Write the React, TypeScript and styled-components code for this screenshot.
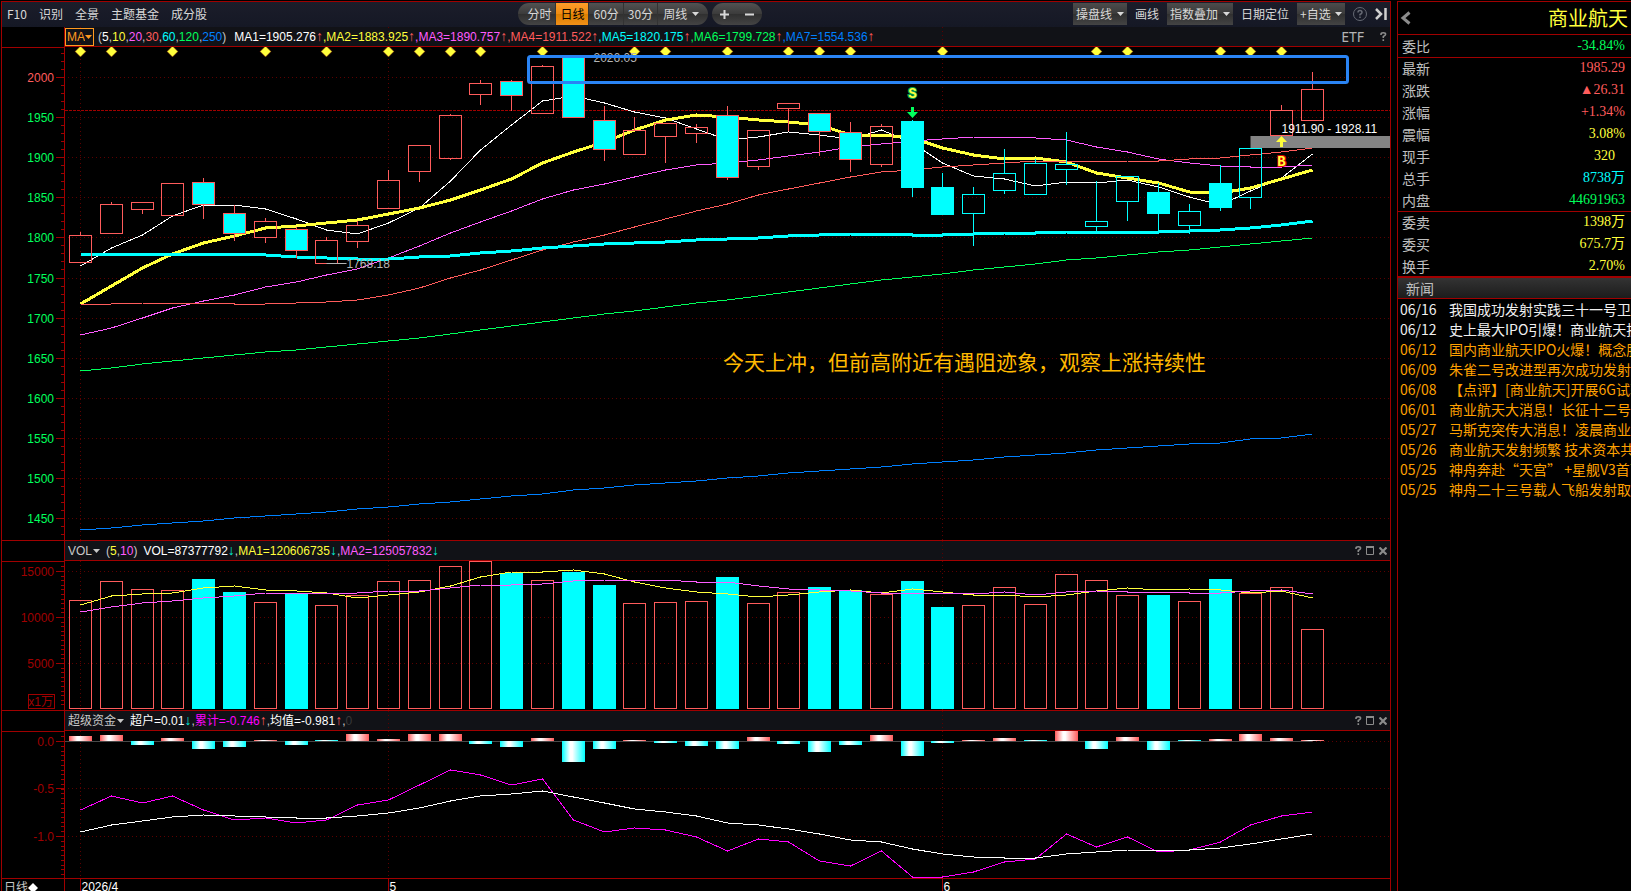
import React, { ReactNode, useLayoutEffect, useRef, useState } from 'react';
import styled, { createGlobalStyle } from 'styled-components';

const RED = '#a00000';
const UP = '#ff5c5c';
const CYAN = '#00ffff';
const YELLOW = '#ffff3c';
const MAGENTA = '#ff5cff';
const GREEN = '#00ff5c';
const BLUE = '#0080ff';
const GRID = '#5c0000';
const SANS = '"Liberation Sans", "Noto Sans CJK SC", sans-serif';
const CJK = '"Noto Sans CJK SC", sans-serif';

const Global = createGlobalStyle`
  * { box-sizing: border-box; }
  body { margin: 0; background: #000; color: #fff; font: 12px/18px ${SANS}; }
  button, select { font: inherit; color: inherit; background: none; border: 0; padding: 0; margin: 0; cursor: pointer; }
  option { background: #222; color: #ddd; }
  a { color: inherit; text-decoration: none; }
`;

const Page = styled.div`
  display: flex;
  gap: 6px;
  height: 100vh;
  min-height: 600px;
  padding: 1px 0 0 1px;
  overflow: hidden;
`;

const ChartPanel = styled.main`
  flex: 1;
  min-width: 0;
  display: flex;
  flex-direction: column;
  border: 1px solid ${RED};
  border-bottom: 0;
`;

const Toolbar = styled.header`
  flex: none;
  height: 25px;
  display: flex;
  align-items: center;
  padding: 0 3px 1px 0;
  background: linear-gradient(#1b1d2a, #151825);
  color: #d8d8d8;
  font-family: ${CJK};
  white-space: nowrap;
`;

const ToolLinks = styled.nav`
  display: flex;
  gap: 12px;
  width: 37%;
  margin-right: 4px;
  padding-left: 5px;
`;

const Pill = styled.div`
  display: flex;
  height: 22px;
  margin-right: 4px;
  border-radius: 11px;
  overflow: hidden;
  background: linear-gradient(#525252, #3c3c3c 48%, #303030 52%, #444);
`;

const PillButton = styled.button<{ $active?: boolean; $first?: boolean }>`
  padding: ${p => (p.$first ? '0 4px 0 9px' : '0 4px')};
  border-right: 1px solid #333;
  color: ${p => (p.$active ? '#000' : 'inherit')};
  background: ${p => (p.$active ? 'linear-gradient(#ff9d2a, #ee8c12 48%, #dd7f00 52%, #f09018)' : 'none')};
`;

const ZoomButton = styled.button`
  width: 25px;
  display: grid;
  place-items: center;
`;

const RightTools = styled.div`
  margin-left: auto;
  display: flex;
  align-items: center;
  gap: 8px;
`;

const SelectBox = styled.span<{ $skin?: 'raised' | 'outline' | 'pill' }>`
  display: inline-flex;
  align-items: center;
  color: ${p => (p.$skin === 'outline' ? '#ff9a20' : 'inherit')};
  height: ${p => (p.$skin === 'raised' ? '22px' : p.$skin === 'outline' ? '18px' : 'auto')};
  padding: ${p => (p.$skin === 'raised' ? '0 3px' : p.$skin === 'outline' ? '0 1px' : p.$skin === 'pill' ? '0 9px 0 5px' : '0')};
  border: ${p => (p.$skin === 'outline' ? '1px solid #ff9a20' : '0')};
  background: ${p => (p.$skin === 'raised' ? 'linear-gradient(#4c4c4c, #3a3a3a 48%, #303030 52%, #444)' : 'none')};
  select { appearance: none; outline: 0; }
  svg { margin-left: ${p => (p.$skin === 'raised' || p.$skin === 'pill' ? '4px' : '0')}; pointer-events: none; }
`;

const IconButton = styled.button`
  display: grid;
  place-items: center;
  color: #8c8c8c;
`;

const PaneBox = styled.section<{ $height?: number }>`
  display: flex;
  flex: ${p => (p.$height ? `0 0 ${p.$height}px` : '1 1 0')};
  min-height: 0;
  border-bottom: 1px solid ${RED};
`;

const AxisColumn = styled.div`
  flex: none;
  width: 63px;
  display: flex;
  flex-direction: column;
  border-right: 1px solid ${RED};
`;

const Corner = styled.div`
  flex: none;
  height: 21px;
  border-bottom: 1px solid ${RED};
`;

const PlotColumn = styled.div`
  flex: 1;
  min-width: 0;
  display: flex;
  flex-direction: column;
`;

const PlotHeader = styled.div`
  position: relative;
  flex: none;
  height: 20px;
  display: flex;
  align-items: center;
  padding-right: 3px;
  background: #111217;
  border-bottom: 1px solid ${RED};
  color: #c8c8c8;
  white-space: nowrap;
`;

const HeaderGuides = styled.div`
  position: absolute;
  inset: 0;
  display: flex;
  pointer-events: none;
`;

const Readout = styled.div<{ $flush?: boolean }>`
  display: flex;
  align-items: center;
  gap: ${p => (p.$flush ? 4 : 6)}px;
  padding-left: ${p => (p.$flush ? 0 : 3)}px;
`;

const Periods = styled.span`
  margin-right: 4px;
`;

const Ink = styled.span<{ $c: string }>`
  color: ${p => p.$c};
`;

const Arrow = styled(Ink)`
  font-size: 14px;
  line-height: 16px;
`;

const HeaderTools = styled.div`
  position: relative;
  margin-left: auto;
  display: flex;
  align-items: center;
  gap: 4px;
`;

const MarketTag = styled.button`
  margin-right: 12px;
  font: 14px/18px "Noto Sans", sans-serif;
  color: #b4b4b4;
`;

const SurfaceBox = styled.div`
  flex: 1;
  min-width: 0;
  min-height: 0;
  overflow: hidden;
  svg { display: block; }
`;

const DateRow = styled.footer`
  flex: none;
  height: 12px;
  display: flex;
  overflow: hidden;
`;

const PeriodCell = styled.div`
  flex: none;
  width: 63px;
  padding-left: 2px;
  border-right: 1px solid ${RED};
  color: #c8c8c8;
  button { display: flex; align-items: center; line-height: 18px; }
`;

const QuotePanel = styled.aside`
  flex: none;
  width: 234px;
  border-left: 1px solid ${RED};
  border-top: 1px solid ${RED};
  overflow: hidden;
`;

const TitleRow = styled.div`
  display: flex;
  align-items: center;
  justify-content: space-between;
  height: 33px;
  padding: 0 3px 0 2px;
  border-bottom: 1px solid ${RED};
  h1 { margin: 0; font: 400 20px/32px ${CJK}; color: ${YELLOW}; }
`;

const QuoteTable = styled.table`
  width: 100%;
  border-collapse: collapse;
  border-bottom: 2px solid ${RED};
`;

const QuoteGroup = styled.tbody`
  & + & { border-top: 1px solid ${RED}; }
`;

const QuoteLabel = styled.th`
  height: 22px;
  padding: 0 0 0 4px;
  text-align: left;
  font: 400 14px/20px ${CJK};
  color: #c0c0c0;
`;

const QuoteValue = styled.td<{ $c: string; $inset?: boolean }>`
  padding: 0 ${p => (p.$inset ? 16 : 6)}px 0 0;
  text-align: right;
  font: 14px/20px "Liberation Serif", "Noto Sans CJK SC", serif;
  color: ${p => p.$c};
`;

const NewsHeading = styled.h2`
  margin: 0;
  padding-left: 8px;
  height: 21px;
  font: 400 14px/20px ${CJK};
  color: #c0c0c0;
  background: linear-gradient(#333, #1c1c1c);
  border-bottom: 1px solid ${RED};
`;

const NewsList = styled.ul`
  margin: 0;
  padding: 0 0 0 2px;
  list-style: none;
`;

const NewsItem = styled.li<{ $fresh?: boolean }>`
  color: ${p => (p.$fresh ? '#f0f0f0' : '#ffa000')};
  a {
    display: grid;
    grid-template-columns: 49px 1fr;
    font: 14px/20px ${CJK};
    white-space: nowrap;
  }
`;

const Caret = () => (
  <svg width="7" height="4" viewBox="0 0 7 4" aria-hidden="true">
    <path d="M0 0H7L3.5 4Z" fill="currentColor" />
  </svg>
);

function Dropdown({ label, text, skin }: { label: string; text: string; skin?: 'raised' | 'outline' | 'pill' }) {
  return (
    <SelectBox $skin={skin}>
      <select aria-label={label} defaultValue={text}>
        <option>{text}</option>
      </select>
      <Caret />
    </SelectBox>
  );
}

/** Measures its box and hands the size to the drawing inside. */
function Surface({ children }: { children: (w: number, h: number) => ReactNode }) {
  const ref = useRef<HTMLDivElement>(null);
  const [size, setSize] = useState({ w: 0, h: 0 });
  useLayoutEffect(() => {
    const el = ref.current;
    if (!el) return;
    const read = () => setSize({ w: el.clientWidth, h: el.clientHeight });
    read();
    const ro = new ResizeObserver(read);
    ro.observe(el);
    return () => ro.disconnect();
  }, []);
  return (
    <SurfaceBox ref={ref}>
      {size.w > 0 && (
        <svg width={size.w} height={size.h} fontSize="12">
          {children(size.w, size.h)}
        </svg>
      )}
    </SurfaceBox>
  );
}

const BASE_WIDTH = 1325;
const snap = (v: number) => Math.floor(v) + 0.5;
const xOf = (i: number, w: number) => snap(((15.5 + i * 30.8) * w) / BASE_WIDTH);
type Domain = [number, number];
const yOf = (v: number, d: Domain, h: number) => ((v - d[0]) / (d[1] - d[0])) * h;

const PRICE: Domain = [47, 540];
const VOLUME: Domain = [561, 710];
const FUND: Domain = [731, 878];
const MONTHS = [0, 10, 28];

type Tick = { at: number; text: string; color?: string };
const priceTicks: Tick[] = Array.from({ length: 12 }, (_, i) => ({
  at: 77.5 + i * 40.1,
  text: String(2000 - i * 50),
  color: i === 0 ? UP : GREEN,
}));
const volumeTicks: Tick[] = [
  { at: 571.5, text: '15000' },
  { at: 617.5, text: '10000' },
  { at: 663.5, text: '5000' },
];
const fundTicks: Tick[] = [
  { at: 741.5, text: '0.0' },
  { at: 788.5, text: '-0.5' },
  { at: 836.5, text: '-1.0' },
];

function Axis({ ticks, domain, minor, unit }: { ticks: Tick[]; domain: Domain; minor: number; unit?: string }) {
  return (
    <Surface>
      {(w, h) => {
        const marks: number[] = [];
        for (let v = ticks[0].at; v > domain[0] + 3; v -= minor) marks.push(v);
        for (let v = ticks[0].at; v < domain[1] - 2; v += minor) marks.push(v);
        // the corner cell is one pixel taller than the plot header
        const y = (v: number) => snap(yOf(v, domain, h + 1) - 1);
        return (
          <>
            <g stroke={RED} shapeRendering="crispEdges">
              {marks.map((v, i) => <line key={i} x1={w - 3} x2={w} y1={y(v)} y2={y(v)} />)}
              {ticks.map(t => <line key={t.text} x1={w - 8} x2={w} y1={y(t.at)} y2={y(t.at)} />)}
            </g>
            {ticks.map(t => (
              <text key={t.text} x={w - 10} y={y(t.at) + 4} textAnchor="end" fill={t.color ?? RED}>{t.text}</text>
            ))}
            {unit && (
              <>
                <rect x={w - 35.5} y={h - 15.5} width="26" height="14" fill="none" stroke={RED} />
                <text x={w - 11} y={h - 4} textAnchor="end" fill={RED}>{unit}</text>
              </>
            )}
          </>
        );
      }}
    </Surface>
  );
}

const MonthGuides = ({ w, h }: { w: number; h: number }) => (
  <g stroke={GRID} strokeDasharray="1 3" shapeRendering="crispEdges">
    {MONTHS.map(i => <line key={i} x1={xOf(i, w)} x2={xOf(i, w)} y1="0" y2={h} />)}
  </g>
);

function Gridlines({ w, h, ticks, domain }: { w: number; h: number; ticks: Tick[]; domain: Domain }) {
  return (
    <>
      <MonthGuides w={w} h={h} />
      <g stroke={GRID} strokeDasharray="1 3" shapeRendering="crispEdges">
        {ticks.map(t => {
          const y = snap(yOf(t.at, domain, h));
          return <line key={t.text} x1="3" x2={w} y1={y} y2={y} />;
        })}
      </g>
    </>
  );
}

function Line({ data, w, h, domain, color, thick }: { data: number[]; w: number; h: number; domain: Domain; color: string; thick?: boolean }) {
  return (
    <polyline
      points={data.map((v, i) => `${xOf(i, w)},${yOf(v, domain, h)}`).join(' ')}
      fill="none"
      stroke={color}
      strokeWidth={thick ? 3 : 1}
      shapeRendering="crispEdges"
    />
  );
}

// body top, body bottom, wick top, wick bottom, kind
type Kind = 'up' | 'down' | 'sell' | 'hold';
const candles: [number, number, number, number, Kind][] = [
  [235, 262, 232, 262, 'up'], [204, 233, 202, 233, 'up'], [202, 209, 202, 213, 'up'], [183, 215, 183, 215, 'up'],
  [182, 204, 178, 218, 'down'], [213, 233, 205, 240, 'down'], [221, 237, 218, 242, 'up'], [229, 250, 227, 257, 'down'],
  [240, 263, 237, 263, 'up'], [225, 241, 221, 247, 'up'], [180, 208, 170, 208, 'up'], [145, 171, 145, 181, 'up'],
  [115, 158, 114, 159, 'up'], [83, 94, 80, 104, 'up'], [81, 95, 80, 110, 'down'], [66, 113, 65, 113, 'up'],
  [57, 117, 57, 117, 'down'], [120, 149, 106, 160, 'down'], [130, 154, 117, 154, 'up'], [123, 136, 123, 162, 'up'],
  [127, 133, 124, 142, 'up'], [115, 177, 106, 179, 'down'], [130, 166, 130, 169, 'up'], [103, 108, 103, 130, 'up'],
  [113, 131, 113, 155, 'down'], [132, 159, 122, 171, 'down'], [126, 164, 124, 166, 'up'], [121, 187, 120, 196, 'sell'],
  [187, 214, 173, 214, 'sell'], [194, 213, 187, 245, 'hold'], [173, 190, 149, 193, 'hold'], [163, 194, 159, 194, 'hold'],
  [164, 169, 132, 184, 'hold'], [221, 226, 181, 230, 'hold'], [176, 201, 176, 220, 'hold'], [192, 213, 183, 231, 'sell'],
  [211, 225, 204, 233, 'hold'], [183, 207, 165, 210, 'sell'], [148, 197, 148, 208, 'hold'], [110, 135, 105, 135, 'up'],
  [89, 120, 72, 120, 'up'],
];

const ma1 = [266, 248, 235, 216, 205, 205, 209, 219, 230, 234, 223, 208, 181, 150, 125, 101, 96, 103, 112, 118, 129, 140, 137, 132, 135, 139, 130, 143, 163, 176, 179, 186, 182, 183, 180, 187, 197, 205, 191, 178, 154];
const ma2 = [304, 286, 268, 254, 243, 236, 228, 226, 223, 220, 214, 208, 200, 190, 179, 163, 152, 142, 130, 120, 115, 117, 120, 122, 125, 135, 135, 138, 148, 155, 159, 158, 162, 173, 178, 183, 192, 193, 188, 179, 170];
const ma3 = [335, 328, 318, 308, 301, 295, 287, 282, 275, 269, 258, 246, 233, 222, 211, 199, 190, 184, 177, 170, 165, 163, 160, 156, 152, 147, 144, 141, 139, 137, 137, 138, 140, 147, 152, 159, 163, 166, 167, 167, 165];
const ma4 = [304, 304, 303, 303, 303, 304, 304, 303, 302, 300, 295, 288, 278, 270, 260, 250, 242, 235, 227, 219, 211, 204, 195, 189, 183, 177, 172, 170, 167, 165, 163, 161, 161, 162, 161, 161, 159, 158, 155, 152, 148];
const ma5 = [254, 254, 254, 254, 254, 254, 255, 257, 258, 259, 259, 257, 256, 253, 251, 248, 246, 244, 243, 242, 240, 239, 238, 236, 235, 234, 234, 235, 235, 234, 233, 233, 232, 232, 232, 232, 231, 230, 228, 225, 221];
const ma6 = [371, 368, 364, 361, 358, 355, 352, 350, 347, 344, 341, 338, 334, 330, 326, 322, 318, 314, 311, 307, 303, 300, 296, 292, 288, 284, 280, 277, 274, 270, 267, 264, 260, 258, 255, 252, 250, 247, 244, 241, 238];
const ma7 = [530, 528, 525, 523, 521, 518, 516, 514, 512, 509, 507, 504, 502, 499, 496, 494, 490, 488, 485, 483, 481, 478, 476, 473, 471, 469, 467, 464, 462, 460, 457, 455, 453, 450, 448, 446, 444, 443, 439, 438, 434];
const events = [0, 1, 3, 6, 8, 10, 11, 12, 13, 15, 18, 19, 21, 23, 24, 25, 28, 33, 34, 37, 38, 39];

function Candle({ i, w, h }: { i: number; w: number; h: number }) {
  const [top, bottom, high, low, kind] = candles[i];
  const x = xOf(i, w);
  const y = (v: number) => snap(yOf(v, PRICE, h));
  const stroke = kind === 'up' || kind === 'down' ? UP : CYAN;
  const fill = kind === 'down' || kind === 'sell' ? CYAN : 'none';
  return (
    <g stroke={stroke} shapeRendering="crispEdges">
      <line x1={x} x2={x} y1={y(high) - 0.5} y2={y(top)} />
      <line x1={x} x2={x} y1={y(bottom)} y2={y(low) + 0.5} />
      <rect x={x - 11} y={y(top)} width="22" height={y(bottom) - y(top)} fill={fill} />
    </g>
  );
}

function PricePlot() {
  return (
    <Surface>
      {(w, h) => {
        const y = (v: number) => yOf(v, PRICE, h);
        const s = { w, h, domain: PRICE };
        const last = snap(y(110));
        return (
          <>
            <Gridlines {...s} ticks={priceTicks} />
            <line x1="0" x2={w} y1={last} y2={last} stroke={RED} strokeDasharray="3 1" shapeRendering="crispEdges" />
            <rect x={xOf(38, w)} y={Math.round(y(136))} width={w - xOf(38, w)} height="12" fill="#848484" />
            <Line {...s} data={ma7} color={BLUE} />
            <Line {...s} data={ma6} color={GREEN} />
            <Line {...s} data={ma1} color="#fff" />
            <Line {...s} data={ma2} color={YELLOW} thick />
            <Line {...s} data={ma3} color={MAGENTA} />
            <Line {...s} data={ma4} color={UP} />
            <Line {...s} data={ma5} color={CYAN} thick />
            {candles.map((_, i) => <Candle key={i} i={i} w={w} h={h} />)}
            {events.map(i => {
              const x = xOf(i, w);
              return <path key={i} d={`M${x} -1l5.500 5.500-5.500 5.500-5.500-5.500Z`} fill={YELLOW} stroke="#600000" strokeWidth="0.500" />;
            })}
            <g fill="#b4b4b4">
              <text x={xOf(16, w) + 20} y={y(62)}>2026.05</text>
              <text x={xOf(8, w) + 20} y={y(268)}>1768.18</text>
              <rect x={xOf(8, w)} y={Math.round(y(263))} width="20" height="1" />
            </g>
            <rect x={xOf(15, w) - 14} y={y(56) + 0.5} width={xOf(40, w) - xOf(15, w) + 49} height={y(82) - y(56)} rx="2" fill="none" stroke="#2a84f4" strokeWidth="3" />
            <g fontFamily='"Liberation Mono", monospace' fontWeight="700" fontSize="14" textAnchor="middle" strokeWidth="2" paintOrder="stroke">
              <text x={xOf(27, w)} y={y(98)} fill={YELLOW} stroke="#00a050">S</text>
              <text x={xOf(39, w)} y={y(166)} fill={YELLOW} stroke="#e00000">B</text>
            </g>
            <path d={`M${xOf(27, w) - 1.5} ${y(107)}h3v5h4l-5.500 6-5.500-6h4Z`} fill={GREEN} />
            <path d={`M${xOf(39, w) - 1.5} ${y(147)}h3v-5h4l-5.500-6-5.500 6h4Z`} fill={YELLOW} />
            <text x={xOf(39, w)} y={y(133)} fill="#fff">1911.90 - 1928.11</text>
            <text x={(w * 658) / BASE_WIDTH} y={y(370)} fill="#ffb900" fontFamily={CJK} fontSize="21">
              今天上冲，但前高附近有遇阻迹象，观察上涨持续性
            </text>
          </>
        );
      }}
    </Surface>
  );
}

const volumes = [600, 581, 589, 590, 579, 592, 602, 594, 605, 595, 581, 580, 566, 561, 573, 580, 572, 585, 603, 602, 601, 577, 603, 592, 587, 590, 594, 581, 607, 605, 587, 604, 574, 580, 595, 595, 601, 579, 593, 587, 629];
const fallingVolumes = new Set([4, 5, 7, 14, 16, 17, 21, 24, 25, 27, 28, 35, 37]);
const volMa1 = [605, 596, 594, 593, 588, 586, 590, 591, 593, 598, 595, 592, 586, 577, 572, 572, 570, 574, 582, 588, 592, 594, 597, 595, 592, 590, 593, 589, 592, 595, 595, 597, 595, 591, 588, 590, 589, 590, 593, 591, 598];
const volMa2 = [612, 607, 603, 601, 598, 596, 593, 593, 594, 593, 591, 591, 588, 585, 585, 584, 581, 580, 580, 580, 582, 582, 586, 589, 590, 591, 593, 593, 593, 594, 592, 595, 592, 591, 592, 592, 593, 593, 591, 590, 594];

function VolumePlot() {
  return (
    <Surface>
      {(w, h) => {
        const s = { w, h, domain: VOLUME };
        return (
          <>
            <Gridlines {...s} ticks={volumeTicks} />
            <g stroke={UP} shapeRendering="crispEdges">
              {volumes.map((v, i) => {
                const top = snap(yOf(v, VOLUME, h));
                const falling = fallingVolumes.has(i);
                return (
                  <rect key={i} x={xOf(i, w) - 11} y={top} width="22" height={h - 1.5 - top} fill={falling ? CYAN : 'none'} stroke={falling ? CYAN : UP} />
                );
              })}
            </g>
            <Line {...s} data={volMa1} color={YELLOW} />
            <Line {...s} data={volMa2} color={MAGENTA} />
          </>
        );
      }}
    </Surface>
  );
}

// height above (+) or below (-) the zero line
const flows = [5, 6, -4, 3, -8, -6, 1, -4, 1, 7, 2, 7, 7, -3, -6, 3, -21, -8, 1, -2, -5, -8, 4, -3, -11, -4, 6, -15, -2, 1, 3, 1, 10, -8, 4, -9, 1, 2, 7, 3, 1];
const coolFlows = new Set([8, 31, 36]);
const fundSum = [810, 796, 803, 796, 810, 820, 818, 823, 820, 805, 800, 785, 770, 775, 785, 779, 820, 832, 828, 830, 837, 851, 839, 842, 861, 866, 851, 877, 877, 872, 862, 859, 834, 847, 837, 852, 850, 842, 825, 816, 812];
const fundMean = [832, 825, 821, 817, 815, 816, 817, 818, 818, 816, 813, 808, 801, 796, 794, 791, 797, 803, 809, 812, 816, 823, 825, 829, 834, 840, 842, 849, 854, 857, 858, 858, 854, 852, 850, 850, 850, 848, 844, 839, 834];

function FundPlot() {
  return (
    <Surface>
      {(w, h) => {
        const s = { w, h, domain: FUND };
        const zero = Math.floor(yOf(741, FUND, h));
        return (
          <>
            <defs>
              {[['warm', UP], ['cool', CYAN]].map(([id, c]) => (
                <linearGradient key={id} id={id}>
                  <stop offset="0" stopColor={c} />
                  <stop offset="0.35" stopColor="#fff" />
                  <stop offset="0.45" stopColor="#fff" />
                  <stop offset="1" stopColor={c} />
                </linearGradient>
              ))}
            </defs>
            <Gridlines {...s} ticks={fundTicks} />
            <rect x="0" y={zero} width={xOf(40, w)} height="1" fill="#484848" />
            {flows.map((v, i) => (
              <rect
                key={i}
                x={xOf(i, w) - 11.5}
                y={v > 0 ? zero - v : zero}
                width="23"
                height={Math.abs(v)}
                fill={v < 0 || coolFlows.has(i) ? 'url(#cool)' : 'url(#warm)'}
              />
            ))}
            <Line {...s} data={fundSum} color="#ff00ff" />
            <Line {...s} data={fundMean} color="#fff" />
          </>
        );
      }}
    </Surface>
  );
}

function Pane({ height, axis, header, tools, children }: { height?: number; axis: ReactNode; header: ReactNode; tools: ReactNode; children: ReactNode }) {
  return (
    <PaneBox $height={height}>
      <AxisColumn>
        <Corner />
        {axis}
      </AxisColumn>
      <PlotColumn>
        <PlotHeader>
          <HeaderGuides>
            <Surface>{(w, h) => <MonthGuides w={w} h={h} />}</Surface>
          </HeaderGuides>
          {header}
          <HeaderTools>{tools}</HeaderTools>
        </PlotHeader>
        {children}
      </PlotColumn>
    </PaneBox>
  );
}

const HelpTool = () => (
  <IconButton aria-label="帮助">
    <svg width="7" height="9" viewBox="0 0 7 9" fill="none" stroke="currentColor" strokeWidth="1.600">
      <path d="M1 3V2.300Q1 0.800 3.300 0.800T5.600 2.300Q5.600 3.500 3.300 4.500V6M3.300 7.200V9" />
    </svg>
  </IconButton>
);

const PaneTools = () => (
  <>
    <HelpTool />
    <IconButton aria-label="最大化">
      <svg width="9" height="9" viewBox="0 0 9 9" fill="none" stroke="currentColor">
        <path d="M0.500 1V8.500H7.500V1" />
        <path d="M0 1H8" strokeWidth="2" />
      </svg>
    </IconButton>
    <IconButton aria-label="关闭">
      <svg width="8" height="8" viewBox="0 0 8 8" stroke="currentColor" strokeWidth="2.200">
        <path d="M0.500 0.500L7.500 7.500M7.500 0.500L0.500 7.500" />
      </svg>
    </IconButton>
  </>
);

const Up = () => <Arrow $c={UP}>↑</Arrow>;
const Down = () => <Arrow $c="#00f0d8">↓</Arrow>;

const periods: [string, string][] = [['5', '#fff'], ['10', YELLOW], ['20', MAGENTA], ['30', UP], ['60', CYAN], ['120', GREEN], ['250', BLUE]];
const averages: [string, string][] = [
  ['MA1=1905.276', '#fff'], ['MA2=1883.925', YELLOW], ['MA3=1890.757', MAGENTA], ['MA4=1911.522', UP],
  ['MA5=1820.175', CYAN], ['MA6=1799.728', GREEN], ['MA7=1554.536', BLUE],
];

const quotes: { label: string; value: string; color: string; inset?: boolean }[][] = [
  [{ label: '委比', value: '-34.84%', color: GREEN }],
  [
    { label: '最新', value: '1985.29', color: UP },
    { label: '涨跌', value: '▲26.31', color: UP },
    { label: '涨幅', value: '+1.34%', color: UP },
    { label: '震幅', value: '3.08%', color: YELLOW },
    { label: '现手', value: '320', color: YELLOW, inset: true },
    { label: '总手', value: '8738万', color: CYAN },
    { label: '内盘', value: '44691963', color: GREEN },
  ],
  [
    { label: '委卖', value: '1398万', color: YELLOW },
    { label: '委买', value: '675.7万', color: YELLOW },
    { label: '换手', value: '2.70%', color: YELLOW },
  ],
];

const news: [string, string][] = [
  ['06/16', '我国成功发射实践三十一号卫星'],
  ['06/12', '史上最大IPO引爆！商业航天技术'],
  ['06/12', '国内商业航天IPO火爆！概念股'],
  ['06/09', '朱雀二号改进型再次成功发射'],
  ['06/08', '【点评】[商业航天]开展6G试验'],
  ['06/01', '商业航天大消息！长征十二号'],
  ['05/27', '马斯克突传大消息！凌晨商业航天'],
  ['05/26', '商业航天发射频繁 技术资本共振'],
  ['05/25', '神舟奔赴“天宫” +星舰V3首飞'],
  ['05/25', '神舟二十三号载人飞船发射取得'],
];

export default function App() {
  return (
    <>
      <Global />
      <Page lang="zh-CN">
        <ChartPanel>
          <Toolbar>
            <ToolLinks>
              {['F10', '识别', '全景', '主题基金', '成分股'].map(t => <button key={t}>{t}</button>)}
            </ToolLinks>
            <Pill>
              <PillButton $first>分时</PillButton>
              <PillButton $active>日线</PillButton>
              <PillButton>60分</PillButton>
              <PillButton>30分</PillButton>
              <Dropdown label="周期" text="周线" skin="pill" />
            </Pill>
            <Pill>
              <ZoomButton aria-label="放大">
                <svg width="9" height="9" stroke="currentColor" strokeWidth="2"><path d="M4.500 0V9M0 4.500H9" /></svg>
              </ZoomButton>
              <ZoomButton aria-label="缩小">
                <svg width="9" height="9" stroke="currentColor" strokeWidth="2"><path d="M0 4.500H9" /></svg>
              </ZoomButton>
            </Pill>
            <RightTools>
              <Dropdown label="操盘线" text="操盘线" skin="raised" />
              <button>画线</button>
              <Dropdown label="指数叠加" text="指数叠加" skin="raised" />
              <button>日期定位</button>
              <Dropdown label="自选" text="+自选" skin="raised" />
              <IconButton aria-label="帮助">
                <svg width="14" height="14" viewBox="0 0 14 14" fill="none" stroke="#666a74">
                  <circle cx="7" cy="7" r="6.500" />
                  <path d="M5 5.500Q5 3.500 7 3.500T9 5.500Q9 6.500 7 7.500V8.500M7 9.500V11" strokeWidth="1.500" />
                </svg>
              </IconButton>
              <IconButton aria-label="收起侧栏">
                <svg width="12" height="12" viewBox="0 0 12 12" fill="none" stroke="#d0d0d0" strokeWidth="2.500">
                  <path d="M1 1L6 6L1 11M10.500 0V12" />
                </svg>
              </IconButton>
            </RightTools>
          </Toolbar>

          <Pane
            axis={<Axis ticks={priceTicks} domain={PRICE} minor={8.02} />}
            header={
              <Readout $flush>
                <Dropdown label="主图指标" text="MA" skin="outline" />
                <Periods>
                  ({periods.map(([t, c], i) => <React.Fragment key={t}>{i > 0 && ','}<Ink $c={c}>{t}</Ink></React.Fragment>)})
                </Periods>
                <span>
                  {averages.map(([t, c], i) => (
                    <Ink key={t} $c={c}>{i > 0 && ','}{t}<Up /></Ink>
                  ))}
                </span>
              </Readout>
            }
            tools={<><MarketTag>ETF</MarketTag><HelpTool /></>}
          >
            <PricePlot />
          </Pane>

          <Pane
            height={170}
            axis={<Axis ticks={volumeTicks} domain={VOLUME} minor={4.6} unit="x1万" />}
            header={
              <Readout>
                <Dropdown label="成交量指标" text="VOL" />
                <span>(<Ink $c={YELLOW}>5</Ink>,<Ink $c={MAGENTA}>10</Ink>)</span>
                <span>
                  <Ink $c="#fff">VOL=87377792</Ink><Down />,
                  <Ink $c={YELLOW}>MA1=120606735</Ink><Down />,
                  <Ink $c={MAGENTA}>MA2=125057832</Ink><Down />
                </span>
              </Readout>
            }
            tools={<PaneTools />}
          >
            <VolumePlot />
          </Pane>

          <Pane
            height={168}
            axis={<Axis ticks={fundTicks} domain={FUND} minor={4.75} />}
            header={
              <Readout>
                <Dropdown label="资金指标" text="超级资金" />
                <span>
                  <Ink $c="#fff">超户=0.01</Ink><Down />,
                  <Ink $c="#ff00ff">累计=-0.746</Ink><Up />,
                  <Ink $c="#fff">均值=-0.981</Ink><Up />,<Ink $c="#383838">0</Ink>
                </span>
              </Readout>
            }
            tools={<PaneTools />}
          >
            <FundPlot />
          </Pane>

          <DateRow>
            <PeriodCell>
              <button>
                日线
                <svg width="10" height="10" viewBox="0 0 10 10" fill="#fff"><path d="M5 0L10 5L5 10L0 5Z" /></svg>
              </button>
            </PeriodCell>
            <Surface>
              {w => (
                <>
                  {['2026/4', '5', '6'].map((t, i) => (
                    <React.Fragment key={t}>
                      <line x1={xOf(MONTHS[i], w)} x2={xOf(MONTHS[i], w)} y1="0" y2="12" stroke={RED} />
                      <text x={xOf(MONTHS[i], w) + 1} y="12" fill="#fff">{t}</text>
                    </React.Fragment>
                  ))}
                </>
              )}
            </Surface>
          </DateRow>
        </ChartPanel>

        <QuotePanel>
          <TitleRow>
            <IconButton aria-label="返回">
              <svg width="11" height="14" viewBox="0 0 11 14" fill="none" stroke="currentColor" strokeWidth="3">
                <path d="M9.500 1.500L3 7L9.500 12.500" />
              </svg>
            </IconButton>
            <h1>商业航天</h1>
          </TitleRow>
          <QuoteTable>
            {quotes.map((group, g) => (
              <QuoteGroup key={g}>
                {group.map(q => (
                  <tr key={q.label}>
                    <QuoteLabel scope="row">{q.label}</QuoteLabel>
                    <QuoteValue $c={q.color} $inset={q.inset}>{q.value}</QuoteValue>
                  </tr>
                ))}
              </QuoteGroup>
            ))}
          </QuoteTable>
          <NewsHeading>新闻</NewsHeading>
          <NewsList>
            {news.map(([date, title], i) => (
              <NewsItem key={title} $fresh={i < 2}>
                <a href="#news"><span>{date}</span><span>{title}</span></a>
              </NewsItem>
            ))}
          </NewsList>
        </QuotePanel>
      </Page>
    </>
  );
}
